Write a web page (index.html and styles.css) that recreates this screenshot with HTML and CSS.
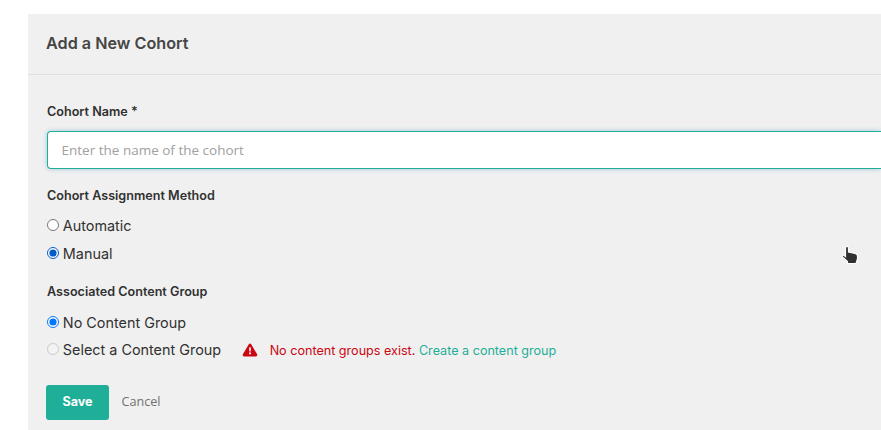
FILE: index.html
```html
<!DOCTYPE html>
<html lang="en">
<head>
<meta charset="utf-8">
<title>Add a New Cohort</title>
<link rel="stylesheet" href="styles.css">
</head>
<body>
<form class="cohort-form">
  <header class="form-header"><h3 class="form-title">Add a New Cohort</h3></header>
  <div class="form-body">
    <label class="field-label" for="name">Cohort Name *</label>
    <input class="name-input" id="name" type="text" placeholder="Enter the name of the cohort">
    <h4 class="field-label method-label">Cohort Assignment Method</h4>
    <label class="option"><input type="radio" name="method">Automatic</label>
    <label class="option"><input class="hovered" type="radio" name="method" checked>Manual</label>
    <h4 class="field-label group-label">Associated Content Group</h4>
    <label class="option"><input type="radio" name="group" checked>No Content Group</label>
    <div class="option-row">
      <label class="option"><input class="unavailable" type="radio" name="group" disabled>Select a Content Group</label>
      <svg class="warning" viewBox="0 0 16 14"><path d="M8 .5c.5 0 .9.3 1.200.7l5.900 10.100c.6 1-.1 2.200-1.200 2.200H2.100C1 13.500.3 12.300.9 11.300L6.800 1.200C7.100.8 7.500.5 8 .5Z" fill="#cb0712"/><path d="M7 4.500h2l-.3 4H7.300Z" fill="#f0f0f0"/><path d="M7 9.500h2v1.800H7Z" fill="#f0f0f0"/></svg>
      <p class="notice">No content groups exist. <a href="#">Create a content group</a></p>
    </div>
    <div class="actions"><button class="save" type="button">Save</button><a class="cancel" href="#">Cancel</a></div>
  </div>
</form>
<svg class="cursor" viewBox="0 0 18 20"><path d="M4.500 2.500Q6 .5 7.500 2.500V7L14 8.500Q16.500 9 16.500 11V14L15 18.500H6.500V16.500L1.500 12Q.5 10 2.500 10L4.500 11.500Z" fill="#303030" stroke="#fff" stroke-width="1.200"/></svg>
</body>
</html>
```
FILE: styles.css
```css
* { box-sizing: border-box; }
body { margin: 0; background: #fff; font-family: Inter, sans-serif; color: #313131; }
.cohort-form { margin: 14px 0 0 28px; height: 416px; background: #f0f0f0; }
.form-header { height: 61px; padding: 19px 18px; border-bottom: 1px solid #e0e0e0; }
.form-title { margin: 0; font-size: 16.2px; line-height: 21px; font-weight: 600; color: #454545; }
.form-body { padding: 27px 0 0 19px; }
.field-label { display: block; margin: 0; font-size: 12.6px; line-height: 20px; font-weight: 600; }
.name-input { display: block; width: 100%; height: 38px; margin-top: 9px; padding: 0 14px 0 13.5px; border: 1px solid #1fae97; border-right: 0; border-radius: 4px 0 0 4px; background: #fff; font: 13.5px "Open Sans", sans-serif; box-shadow: 0 0 5px #a5c5de; }
.name-input::placeholder { color: #a0a0a0; }
.method-label { margin-top: 17px; }
.option { display: flex; align-items: center; height: 28px; font-size: 14.4px; }
.method-label + .option { margin-top: 5px; }
.option input { width: 12px; height: 12px; margin: 0 3.8px 0 0; accent-color: #0075ff; }
.option .hovered { accent-color: #005cc8; }
.option .unavailable { margin-bottom: 2px; }
.group-label { margin-top: 15px; }
.group-label + .option { margin-top: 6px; }
.option-row { display: flex; align-items: center; height: 27px; }
.warning { width: 16px; height: 14px; margin-left: 21px; }
.notice { margin: 2px 0 0 11.5px; font-size: 12.6px; color: #cb0712; }
.notice a { color: #1fae97; text-decoration: none; }
.actions { display: flex; align-items: center; margin: 22px 0 0 -1px; }
.save { width: 63px; height: 35px; padding: 0 0 2px; border: 0; border-radius: 3px; background: #1fae97; color: #fff; font: 700 12.6px Inter, sans-serif; }
.cancel { margin: -3px 0 0 12.500px; color: #707070; text-decoration: none; font: 12.6px "Open Sans", sans-serif; }
.cursor { position: absolute; left: 841px; top: 245px; width: 18px; height: 20px; }
```
